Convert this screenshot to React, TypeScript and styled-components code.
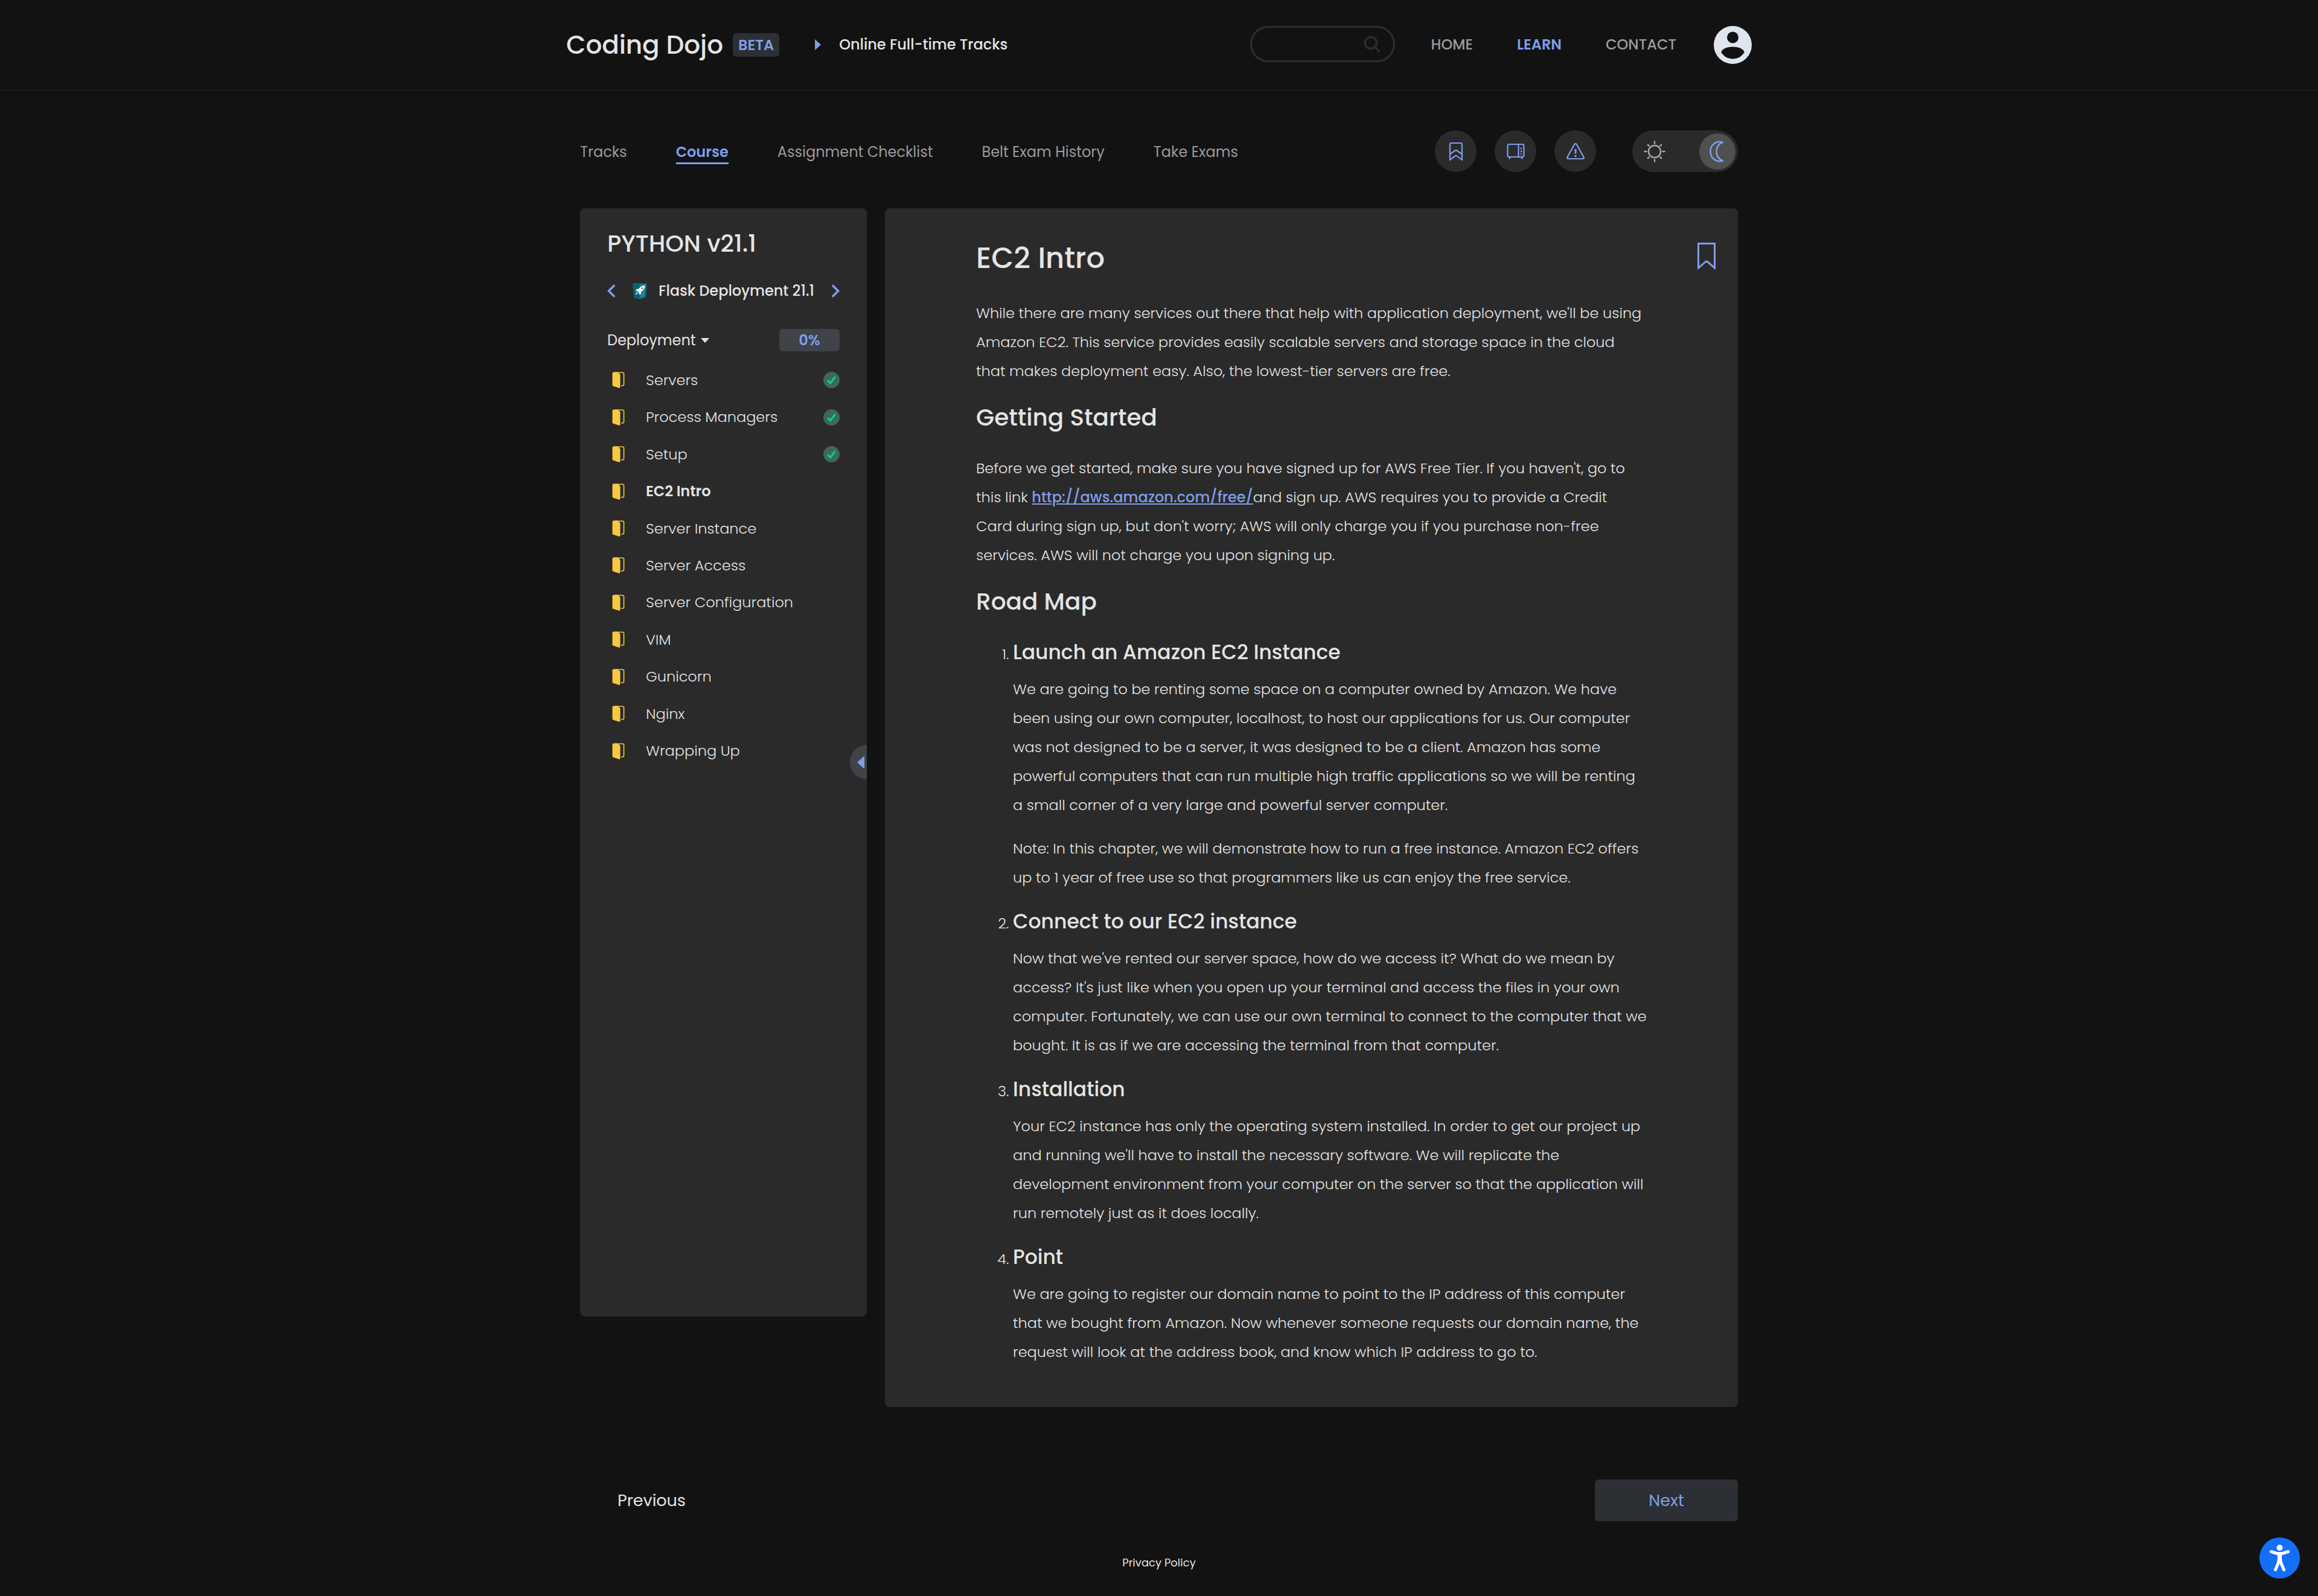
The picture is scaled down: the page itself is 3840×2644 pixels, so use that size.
import React from "react";
import styled, { createGlobalStyle, css } from "styled-components";

const color = {
  page: "#121212",
  line: "#1f1f1f",
  panel: "#2a2a2a",
  chip: "#2c2f33",
  chipLight: "#404348",
  knob: "#505050",
  text: "#e4e4e4",
  muted: "#9b9b9b",
  blue: "#7e9eea",
  folder: "#fac83f",
};

const GlobalStyle = createGlobalStyle`
  *, *::before, *::after { box-sizing: border-box; }
  body {
    margin: 0;
    background: ${color.page};
    color: ${color.text};
    font-family: Poppins, Inter, "Open Sans", sans-serif;
    font-size: 24px;
    line-height: 36px;
  }
  h1, h2, h3, p, ul, ol { margin: 0; padding: 0; font-weight: inherit; }
  ul { list-style: none; }
  a { color: inherit; text-decoration: none; }
  button, input { font: inherit; color: inherit; background: none; border: 0; margin: 0; padding: 0; }
  button { cursor: pointer; }
  svg { display: block; flex: none; }
`;

const Header = styled.header`
  border-bottom: 1px solid ${color.line};
`;

const HeaderInner = styled.div`
  display: flex;
  align-items: center;
  max-width: 1964px;
  height: 149px;
  margin: 0 auto;
`;

const Brand = styled.a`
  font-size: 42px;
  line-height: 64px;
  font-weight: 500;
`;

const Beta = styled.span`
  margin-left: 16px;
  padding: 0 9px;
  border-radius: 6px;
  background: ${color.chip};
  color: ${color.blue};
  font-weight: 600;
  line-height: 39px;
`;

const TrackLink = styled.a`
  display: flex;
  align-items: center;
  gap: 30px;
  margin-left: 59px;
  padding-bottom: 2px;
  font-weight: 500;
`;

const Search = styled.label`
  display: flex;
  align-items: center;
  width: 240px;
  height: 60px;
  margin: 0 0 3px auto;
  padding: 0 21px;
  border: 3px solid ${color.chip};
  border-radius: 30px;
  input { flex: 1; min-width: 0; outline: 0; }
`;

const MainNav = styled.nav`
  display: flex;
  gap: 73px;
  margin-left: 59px;
  padding-bottom: 2px;
`;

const NavLink = styled.a<{ $active?: boolean }>`
  color: ${(p) => (p.$active ? color.blue : color.muted)};
  font-weight: ${(p) => (p.$active ? 600 : 500)};
`;

const AvatarButton = styled.button`
  margin-left: 62px;
`;

const Page = styled.div`
  max-width: 1918px;
  margin: 0 auto;
`;

const SubHeader = styled.div`
  display: flex;
  align-items: center;
  justify-content: space-between;
  padding: 66px 0 60px;
`;

const Tabs = styled.nav`
  display: flex;
  gap: 81px;
`;

const Tab = styled.a<{ $active?: boolean }>`
  padding-top: 5px;
  color: ${color.muted};
  border-bottom: 3px solid transparent;
  line-height: 34px;
  ${(p) =>
    p.$active &&
    css`
      color: ${color.blue};
      border-bottom-color: ${color.blue};
      font-weight: 600;
    `}
`;

const Tools = styled.div`
  display: flex;
  gap: 30px;
`;

const RoundButton = styled.button`
  display: grid;
  place-items: center;
  width: 69px;
  height: 69px;
  border-radius: 50%;
  background: ${color.panel};
`;

const ThemeSwitch = styled.button`
  display: flex;
  align-items: center;
  justify-content: space-between;
  width: 175px;
  height: 69px;
  margin-left: 30px;
  padding: 0 4px 0 19px;
  border-radius: 35px;
  background: ${color.panel};
`;

const Knob = styled.span`
  display: grid;
  place-items: center;
  width: 60px;
  height: 60px;
  border-radius: 50%;
  background: ${color.knob};
`;

const Columns = styled.div`
  display: flex;
  align-items: flex-start;
  gap: 30px;
`;

const Sidebar = styled.aside`
  position: relative;
  width: 475px;
  min-height: 1836px;
  padding: 35px 45px;
  border-radius: 8px;
  background: ${color.panel};
  overflow: hidden;
`;

const StackTitle = styled.h2`
  font-size: 39px;
  line-height: 48px;
  font-weight: 500;
`;

const CourseSwitch = styled.div`
  display: flex;
  align-items: center;
  margin-top: 36px;
  font-weight: 500;
`;

const CourseName = styled.span`
  display: flex;
  flex: 1;
  align-items: center;
  justify-content: center;
  gap: 19px;
  white-space: nowrap;
`;

const ChapterBar = styled.div`
  display: flex;
  align-items: center;
  justify-content: space-between;
  margin-top: 45px;
`;

const ChapterButton = styled.button`
  display: flex;
  align-items: center;
  gap: 8px;
`;

const Percent = styled.span`
  width: 100px;
  border-radius: 6px;
  background: ${color.chipLight};
  color: ${color.blue};
  font-weight: 600;
  line-height: 37px;
  text-align: center;
`;

const LessonList = styled.ul`
  display: grid;
  grid-auto-rows: 1fr;
  height: 676px;
  margin-top: 17px;
`;

const Lesson = styled.li`
  display: flex;
  align-items: center;
`;

const LessonLink = styled.a<{ $current?: boolean }>`
  display: flex;
  flex: 1;
  align-items: center;
  gap: 35px;
  padding-left: 8px;
  font-weight: ${(p) => (p.$current ? 600 : 300)};
`;

const Collapse = styled.button`
  position: absolute;
  top: 889px;
  right: -29px;
  display: flex;
  align-items: center;
  width: 57px;
  height: 57px;
  padding-left: 12px;
  border-radius: 50%;
  background: ${color.chipLight};
`;

const Article = styled.article`
  position: relative;
  flex: 1;
  min-width: 0;
  padding: 46px 151px 67px;
  border-radius: 8px;
  background: ${color.panel};
  font-weight: 300;
  line-height: 48px;
`;

const BookmarkButton = styled.button`
  position: absolute;
  top: 57px;
  right: 37px;
`;

const Title = styled.h1`
  font-size: 48px;
  line-height: 74px;
  font-weight: 500;
`;

const Section = styled.h2`
  margin-top: 23px;
  font-size: 39px;
  line-height: 60px;
  font-weight: 500;
`;

const Paragraph = styled.p`
  margin-top: 30px;
`;

const Inline = styled.a`
  color: ${color.blue};
  font-weight: 500;
  text-decoration: underline;
`;

const Steps = styled.ol`
  margin-top: 27px;
  padding-left: 61px;
`;

const Step = styled.li`
  & + & { margin-top: 22px; }
  p + p { margin-top: 24px; }
`;

const StepTitle = styled.h3`
  margin-bottom: 10px;
  font-size: 33px;
  line-height: 54px;
  font-weight: 500;
`;

const Pager = styled.nav`
  display: flex;
  justify-content: space-between;
  margin-top: 120px;
  font-size: 27px;
`;

const PagerLink = styled.a<{ $filled?: boolean }>`
  width: 237px;
  border-radius: 6px;
  line-height: 69px;
  text-align: center;
  ${(p) =>
    p.$filled &&
    css`
      background: ${color.chip};
      color: ${color.blue};
    `}
`;

const Footer = styled.footer`
  padding: 51px 0 37px;
  font-size: 18px;
  text-align: center;
`;

const AccessButton = styled.button`
  position: fixed;
  right: 30px;
  bottom: 29px;
`;

const SearchIcon = () => (
  <svg width="28" height="28" viewBox="0 0 28 28" fill="none" stroke="#2a2a2a" strokeWidth="4">
    <circle cx="12" cy="12" r="9.700" />
    <path d="M19 19l7.500 8" />
  </svg>
);

const AvatarIcon = () => (
  <svg width="63" height="63" viewBox="0 0 63 63">
    <circle cx="31.5" cy="31.5" r="31.5" fill="#dfe5ee" />
    <circle cx="31.5" cy="19" r="9.5" fill={color.page} />
    <path d="M12.500 44C12.500 37.500 24 34.500 31.500 34.500S50.500 37.500 50.500 44C46 51 39 54.500 31.500 54.500S17 51 12.500 44z" fill={color.page} />
  </svg>
);

const ChevronsBookmark = () => (
  <svg width="24" height="32" viewBox="0 0 24 32" fill="none" stroke={color.blue} strokeWidth="2.200" strokeLinejoin="round">
    <path d="M2 4a2 2 0 0 1 2-2h16a2 2 0 0 1 2 2v26l-8.500-6.500a2.500 2.500 0 0 0-3 0L2 30z" />
    <path d="M2 20.500l8.500-6a2.500 2.500 0 0 1 3 0l8.500 6" />
  </svg>
);

const ScreenIcon = () => (
  <svg width="30" height="28" viewBox="0 0 30 28" fill="none" stroke={color.blue} strokeWidth="2.200">
    <rect x="1.500" y="2" width="27" height="21" rx="3" />
    <path d="M19.500 2v21M6 23l-2 3.500M24 23l2 3.500" />
    <path d="M24 7.500v12" strokeDasharray="3 2" />
  </svg>
);

const AlertIcon = () => (
  <svg width="30" height="28" viewBox="0 0 30 28" fill="none" stroke={color.blue} strokeWidth="2.200" strokeLinejoin="round">
    <path d="M13.300 2a2 2 0 0 1 3.400 0l12 21.500a1.700 1.700 0 0 1-1.500 2.500H2.800a1.700 1.700 0 0 1-1.500-2.500z" />
    <path d="M15 10v7.500M15 20v3" strokeWidth="3" />
  </svg>
);

const SunIcon = () => (
  <svg width="36" height="36" viewBox="0 0 36 36" fill="none" stroke="#a8a8a8" strokeWidth="2.500" strokeLinecap="round">
    <circle cx="18" cy="18" r="10" />
    <path d="M18 1.500v3M18 31.500v3M1.500 18h3M31.500 18h3M7 7l1.500 1.500M27.500 27.500L29 29M29 7l-1.500 1.500M8.500 27.500L7 29" />
  </svg>
);

const MoonIcon = () => (
  <svg width="26" height="36" viewBox="0 0 26 36" fill="none" stroke={color.blue} strokeWidth="2.500" strokeLinejoin="round">
    <path d="M22 2.500C10 -.500 1.500 7.500 1.500 18s8.500 18.500 20.500 15.500C15 31 11.500 24.500 11.500 18S15 5 22 2.500z" />
  </svg>
);

const Chevron = ({ flip }: { flip?: boolean }) => (
  <svg width="14" height="22" viewBox="0 0 14 22" fill="none" stroke={color.blue} strokeWidth="3.600" strokeLinecap="round">
    <path d={flip ? "M3 2.500l8.500 8.500L3 19.500" : "M11 2.500L2.500 11l8.500 8.500"} />
  </svg>
);

const ShieldIcon = () => (
  <svg width="24" height="27" viewBox="0 0 24 27">
    <path d="M0 0h24l-2 24-10 3-10-3z" fill="#066577" />
    <path d="M12 2h10l-2 20-8 3z" fill="#2a7f90" />
    <path d="M20.500 4c-4.500 0-8 2-10.500 5.500L6.500 10 5 13l3 .5 2.500 2.500.5 3 3-1.500.5-3.500C18 11.500 20.500 8.500 20.500 4zM7 15l-2.500 4.500L9 17z" fill="#fff" />
    <circle cx="16" cy="8.500" r="1.500" fill="#2a7f90" />
  </svg>
);

const FolderIcon = () => (
  <svg width="21" height="27" viewBox="0 0 21 27">
    <path d="M.500 2.500a2 2 0 0 1 2-2h7l4 4V25c0 1.500-1 2-2.500 1.500L1.500 23.500a1.500 1.500 0 0 1-1-1.500z" fill={color.folder} />
    <path d="M4 1.200h13.500a2 2 0 0 1 2 2v17.500a2 2 0 0 1-2 2H15" fill="none" stroke={color.folder} strokeWidth="1.600" />
  </svg>
);

const DoneIcon = () => (
  <svg width="27" height="27" viewBox="0 0 27 27" role="img" aria-label="Completed">
    <circle cx="13.500" cy="13.500" r="13.500" fill="#3c695c" />
    <path d="M8 15l3.500 4L19 9" fill="none" stroke="#06d47e" strokeWidth="3" strokeLinecap="round" strokeLinejoin="round" />
  </svg>
);

const PersonIcon = () => (
  <svg width="67" height="68" viewBox="0 0 67 68">
    <ellipse cx="33.500" cy="34" rx="33.500" ry="34" fill="#146ff8" />
    <circle cx="33.500" cy="17" r="5" fill="#fff" />
    <path d="M29.500 25.500h8l-.500 8 1 8.500h-9l1-8.500z" fill="#fff" />
    <g fill="none" stroke="#fff" strokeLinecap="round" strokeLinejoin="round" strokeWidth="5">
      <path d="M19.500 23.500L29 26.500h9l9.500-3" />
      <path d="M26.500 53.500l5.500-13M40.500 53.500L35 40.500" />
    </g>
  </svg>
);

const lessons = [
  { name: "Servers", done: true },
  { name: "Process Managers", done: true },
  { name: "Setup", done: true },
  { name: "EC2 Intro", current: true },
  { name: "Server Instance" },
  { name: "Server Access" },
  { name: "Server Configuration" },
  { name: "VIM" },
  { name: "Gunicorn" },
  { name: "Nginx" },
  { name: "Wrapping Up" },
];

const steps = [
  {
    title: "Launch an Amazon EC2 Instance",
    text: [
      "We are going to be renting some space on a computer owned by Amazon. We have been using our own computer, localhost, to host our applications for us. Our computer was not designed to be a server, it was designed to be a client. Amazon has some powerful computers that can run multiple high traffic applications so we will be renting a small corner of a very large and powerful server computer.",
      "Note: In this chapter, we will demonstrate how to run a free instance. Amazon EC2 offers up to 1 year of free use so that programmers like us can enjoy the free service.",
    ],
  },
  {
    title: "Connect to our EC2 instance",
    text: [
      "Now that we've rented our server space, how do we access it? What do we mean by access? It's just like when you open up your terminal and access the files in your own computer. Fortunately, we can use our own terminal to connect to the computer that we bought. It is as if we are accessing the terminal from that computer.",
    ],
  },
  {
    title: "Installation",
    text: [
      "Your EC2 instance has only the operating system installed. In order to get our project up and running we'll have to install the necessary software. We will replicate the development environment from your computer on the server so that the application will run remotely just as it does locally.",
    ],
  },
  {
    title: "Point",
    text: [
      "We are going to register our domain name to point to the IP address of this computer that we bought from Amazon. Now whenever someone requests our domain name, the request will look at the address book, and know which IP address to go to.",
    ],
  },
];

export default function App() {
  return (
    <>
      <GlobalStyle />
      <Header>
        <HeaderInner>
          <Brand href="#">Coding Dojo</Brand>
          <Beta>BETA</Beta>
          <TrackLink href="#">
            <svg width="10" height="18" viewBox="0 0 10 18" fill={color.blue}>
              <path d="M0 0l10 9-10 9z" />
            </svg>
            Online Full-time Tracks
          </TrackLink>
          <Search>
            <input type="text" aria-label="Search" />
            <SearchIcon />
          </Search>
          <MainNav>
            <NavLink href="#">HOME</NavLink>
            <NavLink href="#" $active>LEARN</NavLink>
            <NavLink href="#">CONTACT</NavLink>
          </MainNav>
          <AvatarButton aria-label="Account"><AvatarIcon /></AvatarButton>
        </HeaderInner>
      </Header>
      <Page>
        <SubHeader>
          <Tabs>
            <Tab href="#">Tracks</Tab>
            <Tab href="#" $active>Course</Tab>
            <Tab href="#">Assignment Checklist</Tab>
            <Tab href="#">Belt Exam History</Tab>
            <Tab href="#">Take Exams</Tab>
          </Tabs>
          <Tools>
            <RoundButton aria-label="Bookmarks"><ChevronsBookmark /></RoundButton>
            <RoundButton aria-label="Lectures"><ScreenIcon /></RoundButton>
            <RoundButton aria-label="Report an issue"><AlertIcon /></RoundButton>
            <ThemeSwitch role="switch" aria-checked="true" aria-label="Dark theme">
              <SunIcon />
              <Knob><MoonIcon /></Knob>
            </ThemeSwitch>
          </Tools>
        </SubHeader>
        <Columns>
          <Sidebar>
            <StackTitle>PYTHON v21.1</StackTitle>
            <CourseSwitch>
              <button aria-label="Previous course"><Chevron /></button>
              <CourseName><ShieldIcon />Flask Deployment 21.1</CourseName>
              <button aria-label="Next course"><Chevron flip /></button>
            </CourseSwitch>
            <ChapterBar>
              <ChapterButton>
                Deployment
                <svg width="14" height="8" viewBox="0 0 14 8" fill={color.text}><path d="M0 0h14L7 8z" /></svg>
              </ChapterButton>
              <Percent>0%</Percent>
            </ChapterBar>
            <LessonList>
              {lessons.map((l) => (
                <Lesson key={l.name}>
                  <LessonLink href="#" $current={l.current}><FolderIcon />{l.name}</LessonLink>
                  {l.done && <DoneIcon />}
                </Lesson>
              ))}
            </LessonList>
            <Collapse aria-label="Collapse sidebar">
              <svg width="12" height="20" viewBox="0 0 12 20" fill={color.blue}><path d="M12 1v18c0 1-1 1-2 0L1 11c-1-1-1-1 0-2l9-8c1-1 2-1 2 0z" /></svg>
            </Collapse>
          </Sidebar>
          <Article>
            <BookmarkButton aria-label="Bookmark this page">
              <svg width="30" height="45" viewBox="0 0 30 45" fill="none" stroke={color.blue} strokeWidth="3">
                <path d="M1.500 1.500h27V42L17 32a3 3 0 0 0-4 0L1.500 42z" />
              </svg>
            </BookmarkButton>
            <Title>EC2 Intro</Title>
            <Paragraph>
              While there are many services out there that help with application deployment, we'll be using Amazon EC2. This service provides easily scalable servers and storage space in the cloud that makes deployment easy. Also, the lowest-tier servers are free.
            </Paragraph>
            <Section>Getting Started</Section>
            <Paragraph>
              Before we get started, make sure you have signed up for AWS Free Tier. If you haven't, go to this link <Inline href="#">http://aws.amazon.com/free/</Inline>and sign up. AWS requires you to provide a Credit Card during sign up, but don't worry; AWS will only charge you if you purchase non-free services. AWS will not charge you upon signing up.
            </Paragraph>
            <Section>Road Map</Section>
            <Steps>
              {steps.map((s) => (
                <Step key={s.title}>
                  <StepTitle>{s.title}</StepTitle>
                  {s.text.map((t) => <p key={t}>{t}</p>)}
                </Step>
              ))}
            </Steps>
          </Article>
        </Columns>
        <Pager>
          <PagerLink href="#">Previous</PagerLink>
          <PagerLink href="#" $filled>Next</PagerLink>
        </Pager>
      </Page>
      <Footer><a href="#">Privacy Policy</a></Footer>
      <AccessButton aria-label="Accessibility options"><PersonIcon /></AccessButton>
    </>
  );
}
